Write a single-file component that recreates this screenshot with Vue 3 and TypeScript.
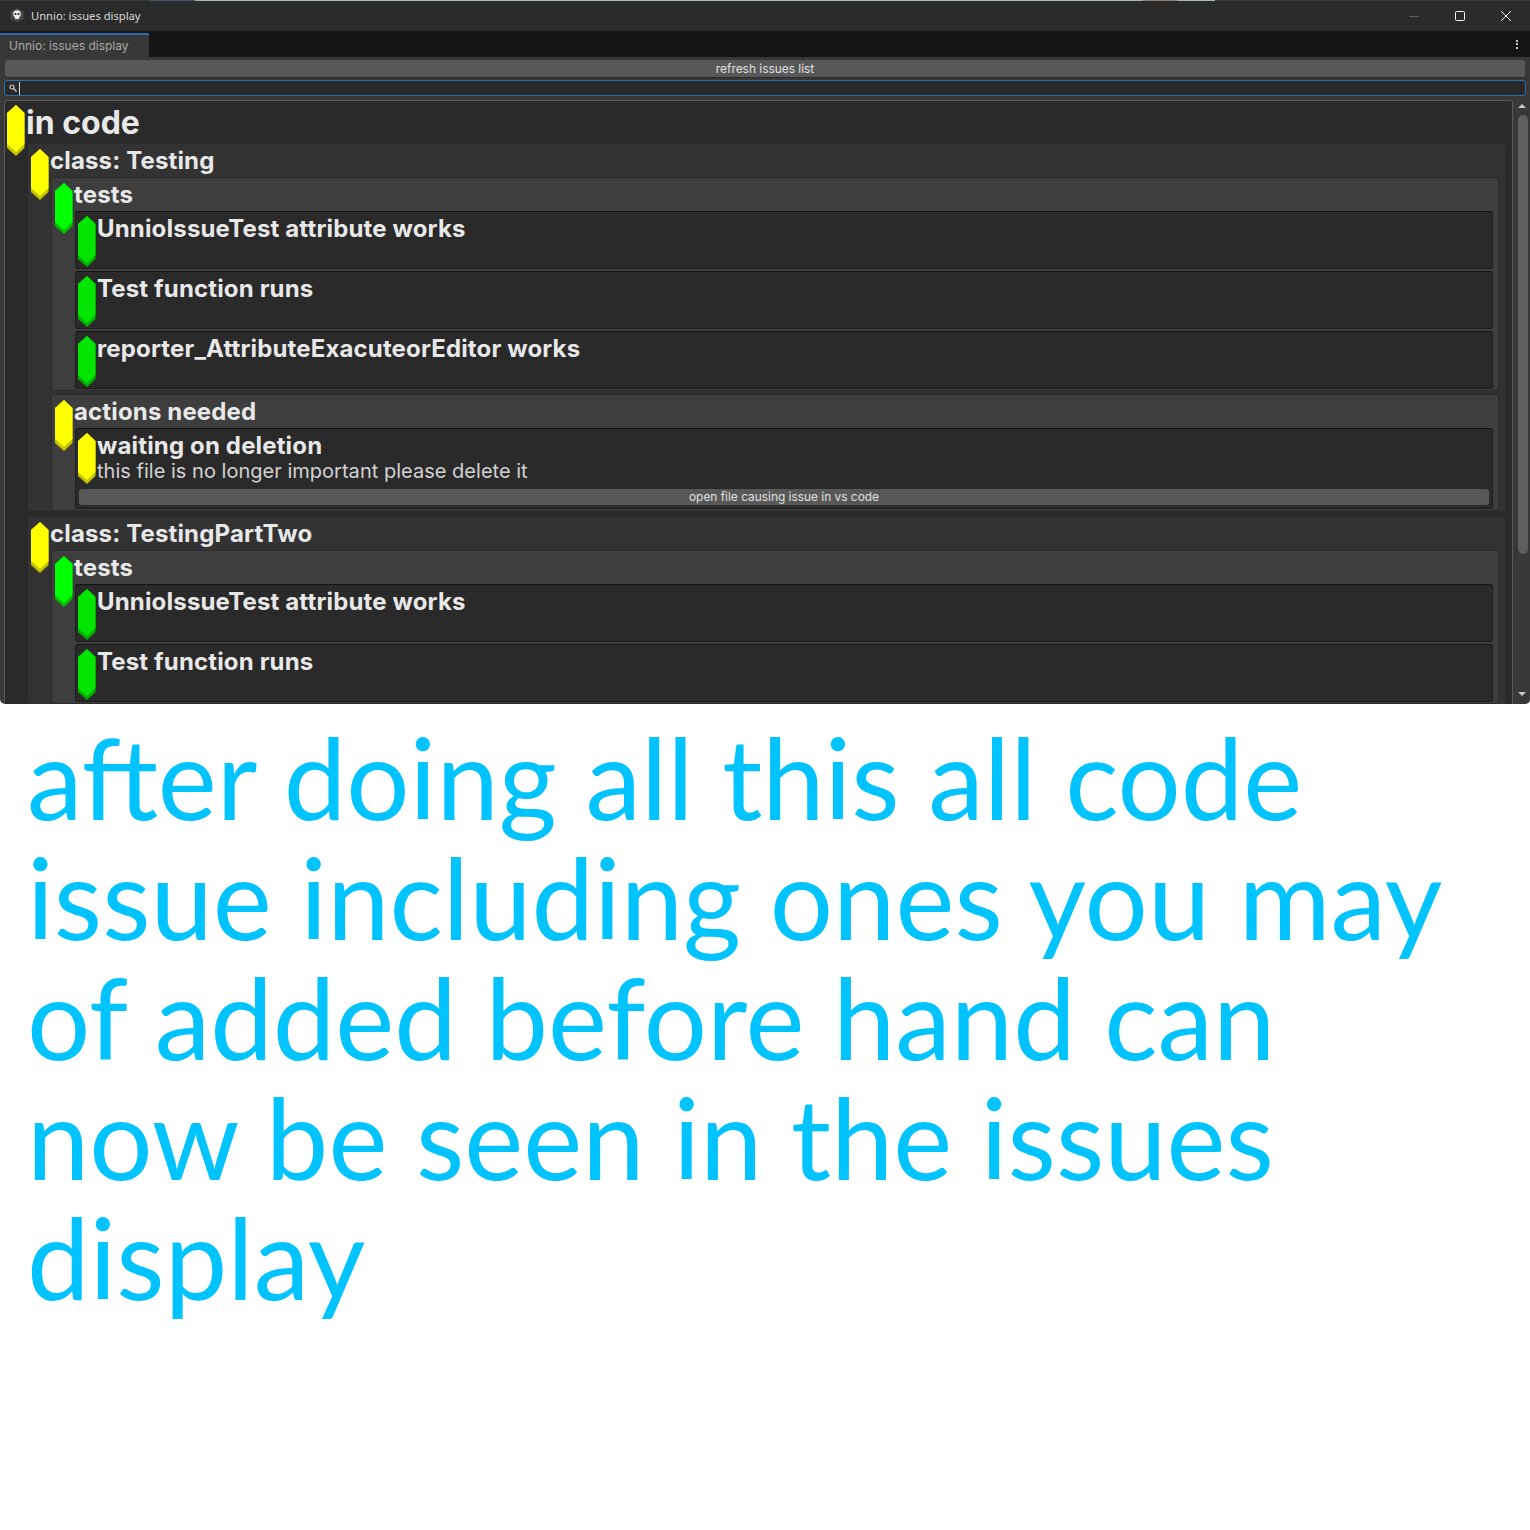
<script setup lang="ts">
interface Node {
  title: string
  level: number
  color: 'yellow' | 'green'
  desc?: string
  action?: string
  children?: Node[]
}
const leaf = (title: string): Node => ({ title, level: 3, color: 'green' })
const classes: Node[] = [
  {
    title: 'class: Testing', level: 1, color: 'yellow',
    children: [
      { title: 'tests', level: 2, color: 'green', children: [
        leaf('UnnioIssueTest attribute works'),
        leaf('Test function runs'),
        leaf('reporter_AttributeExacuteorEditor works')
      ] },
      { title: 'actions needed', level: 2, color: 'yellow', children: [
        { title: 'waiting on deletion', level: 3, color: 'yellow', desc: 'this file is no longer important please delete it', action: 'open file causing issue in vs code' }
      ] }
    ]
  },
  {
    title: 'class: TestingPartTwo', level: 1, color: 'yellow',
    children: [
      { title: 'tests', level: 2, color: 'green', children: [
        leaf('UnnioIssueTest attribute works'),
        leaf('Test function runs')
      ] }
    ]
  }
]
const gemFill = (color: 'yellow' | 'green', level: number): [string, string] => {
  if (color === 'yellow') return ['#c4c400', '#ffff00']
  return level === 3 ? ['#00b000', '#00e600'] : ['#00c000', '#00ff00']
}
const outer = '9,0 17.5,8 17.5,43 9,51 0,43 0,8'
const inner = '9,0 17.5,8 17.5,39 9,47 0,39 0,8'
</script>

<template>
  <div class="page">
    <section class="window">
      <div class="desk-strip"></div>
      <header class="titlebar">
        <svg class="logo" width="14" height="15" viewBox="0 0 14 15">
          <polygon points="7,0 13.5,3.5 13.5,11 7,14.5 .5,11 .5,3.5" fill="#474747" />
          <circle cx="7" cy="6" r="3.8" fill="#f0f0f0" />
          <rect x="5" y="8.5" width="4" height="2.5" fill="#f0f0f0" />
          <circle cx="5.5" cy="6" r="1.1" fill="#1e1e1e" />
          <circle cx="8.5" cy="6" r="1.1" fill="#1e1e1e" />
        </svg>
        <span class="wintitle">Unnio: issues display</span>
        <div class="controls">
          <svg width="10" height="10" viewBox="0 0 10 10"><path d="M0 5.5h10" stroke="#5c5c5c" /></svg>
          <svg width="10" height="10" viewBox="0 0 10 10"><rect x=".5" y=".5" width="9" height="9" rx="1" fill="none" stroke="#f0f0f0" /></svg>
          <svg width="10" height="10" viewBox="0 0 10 10"><path d="M0 0l10 10M10 0L0 10" stroke="#f0f0f0" /></svg>
        </div>
      </header>
      <div class="tabbar">
        <div class="tab">Unnio: issues display</div>
        <div class="dots"><i></i><i></i><i></i></div>
      </div>
      <div class="content">
        <button class="btn refresh">refresh issues list</button>
        <div class="search">
          <svg width="8" height="8" viewBox="0 0 8 8"><circle cx="3" cy="3" r="2" fill="none" stroke="#cfcfcf" stroke-width="1.2" /><path d="M4.5 4.5L7.5 7.5" stroke="#cfcfcf" stroke-width="1.4" /></svg>
          <span class="caret"></span>
        </div>
        <div class="scrollarea">
          <div class="box l0">
            <svg class="gem gem0" width="18" height="51" viewBox="0 0 18 51">
              <polygon :points="outer" fill="#c4c400" />
              <polygon :points="inner" fill="#ffff00" />
            </svg>
            <h1 class="h0">in code</h1>
            <div v-for="c in classes" :key="c.title" class="box l1">
              <svg class="gem" width="18" height="51" viewBox="0 0 18 51">
                <polygon :points="outer" :fill="gemFill(c.color, 1)[0]" />
                <polygon :points="inner" :fill="gemFill(c.color, 1)[1]" />
              </svg>
              <h2 class="h1">{{ c.title }}</h2>
              <div v-for="g in c.children" :key="g.title" class="box l2">
                <svg class="gem" width="18" height="51" viewBox="0 0 18 51">
                  <polygon :points="outer" :fill="gemFill(g.color, 2)[0]" />
                  <polygon :points="inner" :fill="gemFill(g.color, 2)[1]" />
                </svg>
                <h3 class="h1">{{ g.title }}</h3>
                <div v-for="i in g.children" :key="i.title" class="box l3">
                  <svg class="gem gem3" width="18" height="51" viewBox="0 0 18 51">
                    <polygon :points="outer" :fill="gemFill(i.color, 3)[0]" />
                    <polygon :points="inner" :fill="gemFill(i.color, 3)[1]" />
                  </svg>
                  <h4 class="h1">{{ i.title }}</h4>
                  <p v-if="i.desc" class="desc">{{ i.desc }}</p>
                  <button v-if="i.action" class="btn action">{{ i.action }}</button>
                </div>
              </div>
            </div>
          </div>
          <div class="scrollbar">
            <span class="arrow up"></span>
            <span class="thumb"></span>
            <span class="arrow down"></span>
          </div>
        </div>
      </div>
    </section>
    <p class="caption">after doing all this all code issue including ones you may of added before hand can now be seen in the issues display</p>
  </div>
</template>

<style>
html, body { margin: 0; background: #fff; }
</style>

<style scoped>
.page { width: 1530px; height: 1530px; overflow: hidden; background: #fff; font-family: Inter, "Liberation Sans", sans-serif; }
.window { height: 704px; box-sizing: border-box; display: flex; flex-direction: column; background: #383838; border-radius: 0 0 5px 5px; overflow: hidden; }
.desk-strip { height: 1px; flex: none; background: linear-gradient(90deg, #3a3a3a 150px, #44546a 150px, #44546a 195px, #a8b8b4 195px, #a8b8b4 1143px, #8a8078 1143px, #8a8078 1177px, #a8b8b4 1177px, #a8b8b4 1215px, #3a3a3a 1215px); }
.titlebar { height: 30px; flex: none; display: flex; align-items: center; background: #2b2b2b; padding-left: 10px; box-sizing: border-box; }
.logo { flex: none; margin-top: -1px; }
.wintitle { margin-left: 7px; font-size: 11.2px; color: #d9d9d9; font-family: "Noto Sans", sans-serif; margin-top: -2px; }
.controls { margin-left: auto; display: flex; gap: 36px; padding-right: 19px; align-items: center; margin-top: -1px; }
.tabbar { height: 26px; flex: none; display: flex; background: #151515; align-items: stretch; justify-content: space-between; }
.tab { width: 149px; box-sizing: border-box; border-top: 2px solid #2a6aa8; background: #383838; color: #a8a8a8; font-size: 12px; padding-left: 9px; margin-top: 2px; height: 24px; line-height: 22px; }
.dots { width: 26px; display: flex; flex-direction: column; align-items: center; justify-content: center; gap: 1.5px; }
.dots i { width: 2px; height: 2px; background: #c4c4c4; display: block; }
.content { flex: 1; min-height: 0; display: flex; flex-direction: column; padding-top: 3px; }
.btn { display: block; border: 0; padding: 0; font-family: Inter, "Liberation Sans", sans-serif; background: #585858; color: #e0e0e0; font-size: 11.9px; border-radius: 3px; text-align: center; }
.refresh { margin: 0 5px; height: 17px; line-height: 17px; width: 1520px; flex: none; border-bottom: 1px solid #2a2a2a; box-sizing: content-box; }
.search { margin: 2px 4px 0; height: 16px; box-sizing: border-box; border: 1px solid #2e6fb0; border-radius: 3px; background: #2a2a2a; display: flex; align-items: center; padding-left: 4px; flex: none; }
.caret { width: 1px; height: 13px; background: #d8d8d8; margin-left: 2px; }
.scrollarea { flex: 1; min-height: 0; margin-top: 4px; display: flex; padding-left: 4px; overflow: hidden; }
.box { position: relative; box-sizing: border-box; border: 1px solid #4a4a4a; border-radius: 3px; }
.l0 { flex: none; width: 1509px; height: 640px; background: #2a2a2a; border-color: #5a5a5a; padding: 0 6px 0 22px; }
.l1 { background: #333333; border-color: #2a2a2a; padding: 0 6px 0 23px; margin-bottom: 4px; }
.l2 { background: #3e3e3e; border-color: #2c2c2c; padding: 0 5px 1px 23px; margin-bottom: 3px; }
.l1 > .l2:last-child { margin-bottom: 0; }
.l3 { background: #2a2a2a; border-color: #1e1e1e; padding: 0 3px 3px 21px; min-height: 58px; margin-bottom: 2px; border-top-color: #151515; }
.l2 > .l3:last-child { margin-bottom: 0; }
.gem { position: absolute; left: 3px; top: 5px; z-index: 1; }
.gem0 { left: 2px; top: 4px; }
.gem3 { left: 2px; top: 4px; }
h1, h2, h3, h4, .desc { margin: 0; color: #e8e8e8; white-space: nowrap; }
.h0 { font-size: 32px; font-weight: 700; line-height: 44px; height: 42px; margin-left: -1px; }
.h1 { font-size: 24px; font-weight: 700; line-height: 33px; height: 33px; letter-spacing: .15px; }
.l1 > .h1 { margin-left: -1px; }
.l2 > .h1 { margin-left: -1px; }
.desc { font-size: 20px; line-height: 26px; height: 26px; color: #d2d2d2; margin-top: -4px; letter-spacing: .02px; }
.action { margin: 5px 0 0 -18px; width: 1410px; height: 16px; line-height: 16px; }
.scrollbar { flex: none; width: 17px; position: relative; background: #383838; box-sizing: border-box; }
.arrow { position: absolute; left: 5px; width: 0; height: 0; border-left: 4px solid transparent; border-right: 4px solid transparent; }
.arrow.up { top: 4px; border-bottom: 4px solid #c8c8c8; }
.arrow.down { bottom: 8px; border-top: 4px solid #c8c8c8; }
.thumb { position: absolute; left: 5px; top: 15px; width: 10px; height: 439px; border-radius: 5px; background: #5f5f5f; }
.caption { margin: 0; padding: 13px 0 0 27px; width: 1450px; font-family: Lato, "Open Sans", sans-serif; font-size: 111.7px; line-height: 120px; color: #00c3ff; }
</style>
